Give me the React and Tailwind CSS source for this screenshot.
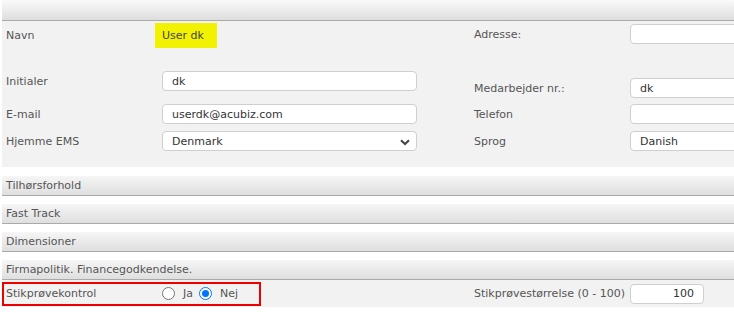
import React from "react";

// --- shared styles ---
const LABEL = "text-[#555]";
const INPUT =
  "h-[20px] bg-white border border-[#cfcfcf] rounded-[4px] px-[9px] text-[11px] text-[#333] outline-none";
const BAR =
  "h-[20px] flex items-center pl-[4px] bg-gradient-to-b from-[#f6f6f6] to-[#dfdfdf] border-b border-[#a9a9a9] text-[#555]";

function Chevron() {
  return (
    <svg width="10" height="7" viewBox="0 0 10 7" className="absolute right-[6px] top-[7px]">
      <path d="M1 1.2 L5 5 L9 1.2" fill="none" stroke="#444" strokeWidth="2" />
    </svg>
  );
}

function Field({ value, w = "w-[255px]", align = "text-left" }) {
  return (
    <div className={`${INPUT} ${w} ${align} shrink-0 flex items-center ${align === "text-right" ? "justify-end" : ""}`}>
      {value}
    </div>
  );
}

function SelectField({ value, w = "w-[255px]" }) {
  return (
    <div className={`${INPUT} ${w} shrink-0 relative flex items-center`}>
      {value}
      <Chevron />
    </div>
  );
}

function Row({ mt, h = "h-[20px]", label, children }) {
  return (
    <div className={`flex items-center ${mt} ${h}`}>
      <div className={`${LABEL} w-[160px] pl-[4px] shrink-0 whitespace-nowrap`}>{label}</div>
      {children}
    </div>
  );
}

function Radio({ checked }) {
  return (
    <span
      className={`w-[13px] h-[13px] rounded-full border inline-flex items-center justify-center bg-white ${
        checked ? "border-[#0075ff] border-[1.5px]" : "border-[#767676]"
      }`}
    >
      {checked && <span className="w-[7px] h-[7px] rounded-full bg-[#0075ff]" />}
    </span>
  );
}

export default function App() {
  return (
    <div
      className="w-[734px] h-[313px] bg-white overflow-hidden pl-[2px] text-[11px] leading-none"
      style={{ fontFamily: '"DejaVu Sans", Verdana, sans-serif' }}
    >
      {/* header strip */}
      <div className="h-[21px] bg-gradient-to-b from-[#fafafa] to-[#dedede] border-b border-[#a9a9a9]" />

      {/* personal details */}
      <div className="h-[146px] bg-[#f2f2f2] flex overflow-hidden">
        <div className="w-[468px] shrink-0">
          <Row mt="mt-[2px]" h="h-[25px]" label="Navn">
            <div className="h-[25px] w-[62px] bg-[#f2f200] text-[#444] flex items-center pl-[7px] -ml-[7px]">User dk</div>
          </Row>
          <Row mt="mt-[23px]" label="Initialer">
            <Field value="dk" />
          </Row>
          <Row mt="mt-[13px]" label="E-mail">
            <Field value="userdk@acubiz.com" />
          </Row>
          <Row mt="mt-[7px]" label="Hjemme EMS">
            <SelectField value="Denmark" />
          </Row>
        </div>
        <div className="shrink-0">
          <Row mt="mt-[3px]" label="Adresse:">
            <Field value="" w="w-[200px]" />
          </Row>
          <Row mt="mt-[34px]" label="Medarbejder nr.:">
            <Field value="dk" w="w-[200px]" />
          </Row>
          <Row mt="mt-[6px]" label="Telefon">
            <Field value="" w="w-[200px]" />
          </Row>
          <Row mt="mt-[7px]" label="Sprog">
            <SelectField value="Danish" w="w-[200px]" />
          </Row>
        </div>
      </div>

      {/* collapsed sections */}
      <div className="mt-[9px] flex flex-col gap-[8px]">
        <div className={BAR}>Tilhørsforhold</div>
        <div className={BAR}>Fast Track</div>
        <div className={BAR}>Dimensioner</div>
        <div className={BAR}>Firmapolitik. Financegodkendelse.</div>
      </div>

      {/* sampling */}
      <div className="h-[27px] bg-[#f2f2f2] flex items-center">
        <div className="w-[259px] h-[24px] border-2 border-[#ee0000] flex items-center shrink-0">
          <div className={`${LABEL} w-[158px] pl-[2px]`}>Stikprøvekontrol</div>
          <Radio />
          <span className={`${LABEL} ml-[8px] mr-[6px]`}>Ja</span>
          <Radio checked />
          <span className={`${LABEL} ml-[8px]`}>Nej</span>
        </div>
        <div className={`${LABEL} ml-[213px] w-[156px] whitespace-nowrap`}>Stikprøvestørrelse (0 - 100)</div>
        <Field value="100" w="w-[74px]" align="text-right" />
      </div>
    </div>
  );
}
